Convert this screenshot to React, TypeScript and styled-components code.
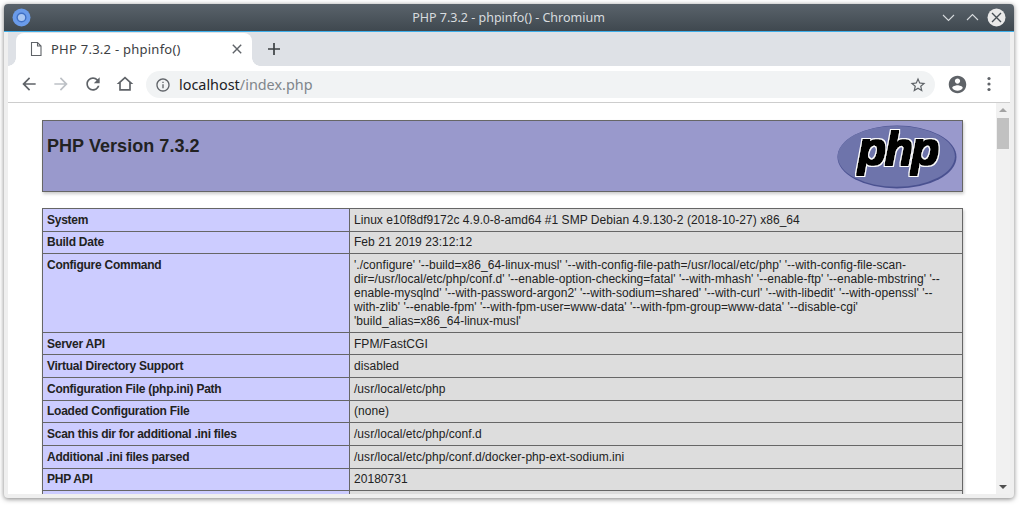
import React from "react";
import styled, { createGlobalStyle } from "styled-components";

const Global = createGlobalStyle`
  html, body { margin: 0; padding: 0; background: #fff; overflow: hidden; }
  #root { width: 1024px; height: 508px; }
`;

const Screen = styled.div`
  width: 1024px;
  height: 508px;
  padding: 4px 10px 10px 4px;
  box-sizing: border-box;
`;

const Win = styled.div`
  width: 1010px;
  height: 494px;
  display: flex;
  flex-direction: column;
  background: #efefef;
  border-radius: 4px;
  box-shadow: 0 1px 5px rgba(0, 0, 0, 0.5);
  overflow: hidden;
`;

const TitleBar = styled.header`
  height: 27px;
  flex: none;
  display: flex;
  align-items: center;
  padding: 0 8px 0 8px;
  background: linear-gradient(#5a636b, #3f484f);
  border-bottom: 1px solid #3daee9;
`;

const AppIcon = styled.svg`
  width: 19px;
  height: 19px;
  flex: none;
`;

const WinTitle = styled.div`
  flex: 1;
  text-align: center;
  font: 12.5px "Noto Sans", sans-serif;
  color: #d8dcdf;
  padding-left: 47px;
`;

const WinControls = styled.div`
  display: flex;
  align-items: center;
  gap: 5px;
`;

const WinButton = styled.svg`
  width: 19px;
  height: 19px;
  flex: none;
`;

const Frame = styled.div`
  flex: 1;
  min-height: 0;
  display: flex;
  flex-direction: column;
  padding: 0 4px 4px;
`;

const TabStrip = styled.div`
  height: 34px;
  flex: none;
  display: flex;
  background: #dee1e6;
  padding-left: 8px;
`;

const Tab = styled.div`
  position: relative;
  width: 236px;
  margin-top: 1px;
  display: flex;
  align-items: center;
  padding: 0 0 1px 12px;
  box-sizing: border-box;
  background: #fff;
  border-radius: 8px 8px 0 0;
  &::before, &::after {
    content: "";
    position: absolute;
    bottom: 0;
    width: 8px;
    height: 8px;
  }
  &::before { left: -8px; background: radial-gradient(circle at 0 0, #dee1e6 7.5px, #fff 8px); }
  &::after { right: -8px; background: radial-gradient(circle at 100% 0, #dee1e6 7.5px, #fff 8px); }
`;

const TabTitle = styled.span`
  flex: 1;
  margin-left: 7px;
  font: 13px "Noto Sans", sans-serif;
  letter-spacing: 0.25px;
  color: #3c4043;
  white-space: nowrap;
`;

const TabIcon = styled.svg`
  width: 16px;
  height: 16px;
  flex: none;
`;

const TabClose = styled.svg`
  width: 16px;
  height: 16px;
  flex: none;
  margin-right: 7px;
`;

const NewTab = styled.svg`
  width: 16px;
  height: 16px;
  margin: 9px 0 0 14px;
`;

const Toolbar = styled.div`
  height: 36px;
  flex: none;
  display: flex;
  align-items: center;
  padding: 0 5px;
  background: #fff;
  border-bottom: 1px solid #cdcdcd;
`;

const NavButton = styled.div`
  width: 32px;
  height: 32px;
  flex: none;
  display: flex;
  align-items: center;
  justify-content: center;
`;

const Omnibox = styled.div`
  flex: 1;
  height: 27px;
  margin: 1px 6px 0 5px;
  padding: 0 8px 0 9px;
  display: flex;
  align-items: center;
  background: #f1f3f4;
  border-radius: 14px;
`;

const Url = styled.div`
  flex: 1;
  margin-left: 8px;
  font: 14.4px "Noto Sans", sans-serif;
  color: #80868b;
  white-space: nowrap;
`;

const Host = styled.span`
  color: #202124;
`;

const Viewport = styled.div`
  flex: 1;
  min-height: 0;
  display: flex;
  background: #fff;
`;

const Page = styled.main`
  flex: 1;
  min-width: 0;
  overflow: hidden;
  padding-top: 17px;
  font: 12px "Liberation Sans", Arial, sans-serif;
  color: #222;
`;

const Banner = styled.div`
  width: 921px;
  height: 72px;
  margin: 0 0 16px 34px;
  box-sizing: border-box;
  display: flex;
  justify-content: space-between;
  padding: 4px 5px 3px 4px;
  background: #9999cc;
  border: 1px solid #666;
  box-shadow: 1px 2px 3px #ccc;
`;

const Heading = styled.h1`
  margin: 11px 0 0;
  font: bold 18px "Liberation Sans", Arial, sans-serif;
  letter-spacing: 0.05px;
  color: #222;
`;

const Logo = styled.svg`
  width: 120px;
  height: 64px;
  flex: none;
  overflow: visible;
`;

const Info = styled.table`
  width: 921px;
  margin-left: 34px;
  table-layout: fixed;
  border-collapse: collapse;
  box-shadow: 1px 2px 3px #ccc;
`;

const Row = styled.tr``;

const Key = styled.td`
  width: 297px;
  padding: 4.7px 5px 3.3px 4px;
  border: 1px solid #666;
  background: #ccccff;
  font-weight: bold;
  vertical-align: top;
  line-height: 13.67px;
  letter-spacing: -0.25px;
`;

const Value = styled.td<{ $multiline?: boolean }>`
  padding: 4.7px 5px 3.3px 4px;
  border: 1px solid #666;
  background: #dddddd;
  vertical-align: top;
  line-height: ${(p) => (p.$multiline ? "13.9px" : "13.67px")};
  letter-spacing: 0.04px;
`;

const Scrollbar = styled.div`
  width: 14px;
  flex: none;
  display: flex;
  flex-direction: column;
  align-items: center;
  justify-content: space-between;
  background: #f1f1f1;
`;

const ScrollTop = styled.div`
  display: flex;
  flex-direction: column;
  align-items: stretch;
  width: 100%;
`;

const Arrow = styled.div<{ $up?: boolean }>`
  height: 14px;
  display: flex;
  align-items: center;
  justify-content: center;
  &::before {
    content: "";
    border-left: 4px solid transparent;
    border-right: 4px solid transparent;
    ${(p) => (p.$up ? "border-bottom: 4px solid #a3a3a3;" : "border-top: 4px solid #505050;")}
  }
`;

const Thumb = styled.div`
  height: 31px;
  margin: 1px 1px 0;
  background: #c1c1c1;
`;

const rows: [string, string][] = [
  ["System", "Linux e10f8df9172c 4.9.0-8-amd64 #1 SMP Debian 4.9.130-2 (2018-10-27) x86_64"],
  ["Build Date", "Feb 21 2019 23:12:12"],
  [
    "Configure Command",
    "'./configure' '--build=x86_64-linux-musl' '--with-config-file-path=/usr/local/etc/php' '--with-config-file-scan-dir=/usr/local/etc/php/conf.d' '--enable-option-checking=fatal' '--with-mhash' '--enable-ftp' '--enable-mbstring' '--enable-mysqlnd' '--with-password-argon2' '--with-sodium=shared' '--with-curl' '--with-libedit' '--with-openssl' '--with-zlib' '--enable-fpm' '--with-fpm-user=www-data' '--with-fpm-group=www-data' '--disable-cgi' 'build_alias=x86_64-linux-musl'",
  ],
  ["Server API", "FPM/FastCGI"],
  ["Virtual Directory Support", "disabled"],
  ["Configuration File (php.ini) Path", "/usr/local/etc/php"],
  ["Loaded Configuration File", "(none)"],
  ["Scan this dir for additional .ini files", "/usr/local/etc/php/conf.d"],
  ["Additional .ini files parsed", "/usr/local/etc/php/conf.d/docker-php-ext-sodium.ini"],
  ["PHP API", "20180731"],
  ["\u00a0", "\u00a0"],
];

const G = "#5f6368";

export default function App() {
  return (
    <Screen>
      <Global />
      <Win>
        <TitleBar>
          <AppIcon viewBox="0 0 19 19">
            <circle cx="9.5" cy="9.5" r="9" fill="#6a9bea" />
            <circle cx="9.5" cy="9.5" r="5" fill="#3f6fc4" />
            <circle cx="9.5" cy="9.5" r="3.6" fill="#a9c6f2" />
          </AppIcon>
          <WinTitle>PHP 7.3.2 - phpinfo() - Chromium</WinTitle>
          <WinControls>
            <WinButton viewBox="0 0 19 19">
              <path d="M4 7l5.5 5.5L15 7" fill="none" stroke="#d5d9dc" strokeWidth="1.1" />
            </WinButton>
            <WinButton viewBox="0 0 19 19">
              <path d="M4 12l5.5-5.5L15 12" fill="none" stroke="#d5d9dc" strokeWidth="1.1" />
            </WinButton>
            <WinButton viewBox="0 0 19 19">
              <circle cx="9.5" cy="9.5" r="9" fill="#e9e9e9" />
              <path d="M5 5l9 9M14 5l-9 9" stroke="#454d54" strokeWidth="1.4" />
            </WinButton>
          </WinControls>
        </TitleBar>
        <Frame>
          <TabStrip>
            <Tab>
              <TabIcon viewBox="0 0 16 16">
                <path d="M3.5 1.5h6l3.5 3.5v9.5h-9.5zM9.5 1.5V5H13" fill="none" stroke="#5f6368" strokeWidth="1.1" />
              </TabIcon>
              <TabTitle>PHP 7.3.2 - phpinfo()</TabTitle>
              <TabClose viewBox="0 0 16 16">
                <path d="M3.8 3.8l8.4 8.4M12.2 3.8l-8.4 8.4" stroke="#5f6368" strokeWidth="1.4" />
              </TabClose>
            </Tab>
            <NewTab viewBox="0 0 16 16">
              <path d="M8 2v12M2 8h12" stroke="#3c4043" strokeWidth="1.7" />
            </NewTab>
          </TabStrip>
          <Toolbar>
            <NavButton>
              <svg width="20" height="20" viewBox="0 0 24 24" fill={G}>
                <path d="M20 11H7.83l5.59-5.59L12 4l-8 8 8 8 1.41-1.41L7.83 13H20v-2z" />
              </svg>
            </NavButton>
            <NavButton>
              <svg width="20" height="20" viewBox="0 0 24 24" fill="#bdc1c6">
                <path d="M12 4l-1.41 1.41L16.17 11H4v2h12.17l-5.58 5.59L12 20l8-8z" />
              </svg>
            </NavButton>
            <NavButton>
              <svg width="20" height="20" viewBox="0 0 24 24" fill={G}>
                <path d="M17.65 6.35C16.2 4.9 14.21 4 12 4c-4.42 0-7.99 3.58-7.99 8s3.57 8 7.99 8c3.73 0 6.84-2.55 7.73-6h-2.08c-.82 2.33-3.04 4-5.65 4-3.31 0-6-2.69-6-6s2.69-6 6-6c1.66 0 3.14.69 4.22 1.78L13 11h7V4l-2.35 2.35z" />
              </svg>
            </NavButton>
            <NavButton>
              <svg width="20" height="20" viewBox="0 0 24 24" fill={G}>
                <path d="M12 3L2 12h3v8h14v-8h3L12 3zm0 2.7l5 4.5V18H7v-7.8l5-4.5z" />
              </svg>
            </NavButton>
            <Omnibox>
              <svg width="16" height="16" viewBox="0 0 24 24" fill={G}>
                <path d="M11 7h2v2h-2zm0 4h2v6h-2zm1-9C6.48 2 2 6.48 2 12s4.48 10 10 10 10-4.48 10-10S17.52 2 12 2zm0 18c-4.41 0-8-3.59-8-8s3.59-8 8-8 8 3.59 8 8-3.59 8-8 8z" />
              </svg>
              <Url>
                <Host>localhost</Host>/index.php
              </Url>
              <svg width="18" height="18" viewBox="0 0 24 24" fill={G}>
                <path d="M22 9.24l-7.19-.62L12 2 9.19 8.63 2 9.24l5.46 4.73L5.82 21 12 17.27 18.18 21l-1.63-7.03L22 9.24zM12 15.4l-3.76 2.27 1-4.28-3.32-2.88 4.38-.38L12 6.1l1.71 4.04 4.38.38-3.32 2.88 1 4.28L12 15.4z" />
              </svg>
            </Omnibox>
            <NavButton>
              <svg width="21" height="21" viewBox="0 0 24 24" fill={G}>
                <path d="M12 2C6.48 2 2 6.48 2 12s4.48 10 10 10 10-4.48 10-10S17.52 2 12 2zm0 3c1.66 0 3 1.34 3 3s-1.34 3-3 3-3-1.34-3-3 1.34-3 3-3zm0 14.2c-2.5 0-4.71-1.28-6-3.22.03-1.99 4-3.08 6-3.08 1.99 0 5.97 1.09 6 3.08-1.29 1.94-3.5 3.22-6 3.22z" />
              </svg>
            </NavButton>
            <NavButton>
              <svg width="16" height="16" viewBox="0 0 16 16" fill={G}>
                <circle cx="8" cy="2.5" r="1.6" />
                <circle cx="8" cy="8" r="1.6" />
                <circle cx="8" cy="13.5" r="1.6" />
              </svg>
            </NavButton>
          </Toolbar>
          <Viewport>
            <Page>
              <Banner>
                <Heading>PHP Version 7.3.2</Heading>
                <Logo viewBox="0 0 120 64">
                  <defs>
                    <filter id="logoOutline" x="-10%" y="-10%" width="120%" height="120%">
                      <feMorphology in="SourceAlpha" operator="dilate" radius="1.5" result="halo" />
                      <feFlood floodColor="#fff" />
                      <feComposite in2="halo" operator="in" result="white" />
                      <feMorphology in="SourceGraphic" operator="dilate" radius="0.5" result="ink" />
                      <feMerge>
                        <feMergeNode in="white" />
                        <feMergeNode in="ink" />
                      </feMerge>
                    </filter>
                  </defs>
                  <ellipse cx="60" cy="32" rx="59.5" ry="31.5" fill="#4a5190" />
                  <ellipse cx="59.3" cy="31.3" rx="58.6" ry="30.4" fill="#6e74ab" />
                  <text
                    x="61"
                    y="40"
                    textAnchor="middle"
                    fontFamily="'Liberation Sans', sans-serif"
                    fontWeight="bold"
                    fontStyle="italic"
                    fontSize="46"
                    letterSpacing="-1.5"
                    fill="#000"
                    filter="url(#logoOutline)"
                  >
                    php
                  </text>
                </Logo>
              </Banner>
              <Info>
                <tbody>
                  {rows.map(([k, v], i) => (
                    <Row key={i}>
                      <Key>{k}</Key>
                      <Value $multiline={v.length > 100}>{v}</Value>
                    </Row>
                  ))}
                </tbody>
              </Info>
            </Page>
            <Scrollbar>
              <ScrollTop>
                <Arrow $up />
                <Thumb />
              </ScrollTop>
              <Arrow />
            </Scrollbar>
          </Viewport>
        </Frame>
      </Win>
    </Screen>
  );
}
